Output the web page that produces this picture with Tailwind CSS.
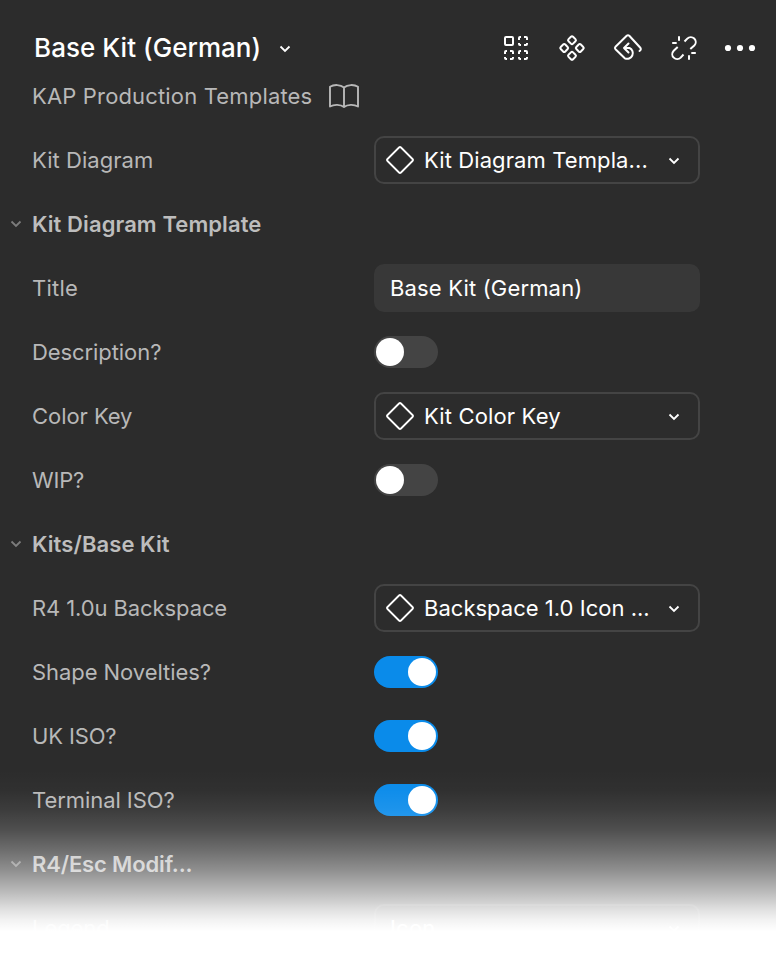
<!DOCTYPE html>
<html lang="en">
<head>
<meta charset="utf-8">
<title>Base Kit (German)</title>
<script src="https://cdn.jsdelivr.net/npm/@tailwindcss/browser@4"></script>
</head>
<body class="bg-white">
<svg class="hidden">
  <symbol id="chev" viewBox="0 0 12 8"><path d="M1.5 1.500 6 6l4.500-4.500" fill="none" stroke="currentColor" stroke-width="1.800"/></symbol>
  <symbol id="diamond" viewBox="0 0 28 28"><path d="M13 1.500 1.500 13q-1 1 0 2L13 26.500q1 1 2 0L26.500 15q1-1 0-2L15 1.500q-1-1-2 0z" fill="none" stroke="currentColor" stroke-width="1.800"/></symbol>
</svg>
<main class="relative w-[776px] h-[960px] overflow-hidden bg-[#2c2c2c] font-['Inter',sans-serif] text-[22px] leading-8 tracking-[-0.06px] text-[#b8b8b8]">
  <header class="flex h-20 items-center pt-4 pl-[34px] pr-5 text-white">
    <h1 class="text-[26px] font-[550] tracking-[0.05px]">Base Kit (German)</h1>
    <svg class="absolute left-[279px] top-[45px] h-2 w-3"><use href="#chev"/></svg>
    <div class="ml-auto flex items-center gap-6">
      <svg class="size-8" viewBox="0 0 32 32" fill="none" stroke="currentColor" stroke-width="2"><rect x="5" y="5" width="8" height="8" rx="1"/><path id="dash" d="M19 8V6q0-1 1-1h1M24 5h2q1 0 1 1v2M27 11v1q0 1-1 1h-2M21 13h-1q-1 0-1-1v-1"/><use href="#dash" y="14"/><use href="#dash" x="-14" y="14"/></svg>
      <svg class="size-8" viewBox="0 0 32 32" fill="none" stroke="currentColor" stroke-width="2"><rect x="-3.200" y="-3.200" width="6.400" height="6.400" rx="1.500" transform="translate(16 8.200) rotate(45)"/><rect x="-3.200" y="-3.200" width="6.400" height="6.400" rx="1.500" transform="translate(16 23.800) rotate(45)"/><rect x="-3.200" y="-3.200" width="6.400" height="6.400" rx="1.500" transform="translate(8.200 16) rotate(45)"/><rect x="-3.200" y="-3.200" width="6.400" height="6.400" rx="1.500" transform="translate(23.800 16) rotate(45)"/></svg>
      <svg class="size-8" viewBox="0 0 32 32" fill="none" stroke="currentColor" stroke-width="2" stroke-linecap="round" stroke-linejoin="round"><path d="M27.500 19q2.300-1.600.6-3.500L17.300 3.800q-1.300-1.200-2.600 0L3.500 14.700q-1.200 1.300 0 2.600l9.300 9A5.600 5.600 0 1 0 17.500 16H12M16.500 11.500 12 16l4.500 4.500"/></svg>
      <svg class="size-8" viewBox="0 0 32 32" fill="none" stroke="currentColor" stroke-width="2"><path d="m16.500 9.500 2.800-2.900a4.900 4.900 0 0 1 7 6.900L22.300 17M9.700 15 5.700 18.700a4.900 4.900 0 0 0 7 6.900L15.500 22.500M11 4.200v4.500M4.200 11h4.500M21 27.800v-4.500M27.800 21h-4.500"/></svg>
      <svg class="size-8" viewBox="0 0 32 32" fill="currentColor"><circle cx="4" cy="16" r="3.100"/><circle cx="16" cy="16" r="3.100"/><circle cx="28" cy="16" r="3.100"/></svg>
    </div>
  </header>
  <div class="flex h-8 items-center pl-8">
    <span class="w-[280px] whitespace-nowrap tracking-[0.16px]">KAP Production Templates</span>
    <svg class="ml-4 h-6 w-8" viewBox="0 0 32 24" fill="none" stroke="currentColor" stroke-width="1.900" stroke-linejoin="round"><path d="M16 3.500C12.500.5 6 .3 2 2.800V22.500c4-2.300 10.500-2.200 14 .5 3.500-2.700 10-2.800 14-.5V2.800C26 .3 19.500.5 16 3.500zV23"/></svg>
  </div>
  <section class="pt-4">
    <div class="flex h-16 items-center pl-8"><span class="w-[342px] tracking-[0.05px]">Kit Diagram</span>
      <div class="flex h-12 w-[326px] items-center rounded-[10px] border-2 border-[#444] pl-2.5 pr-[18px] text-white"><svg class="mr-2.5 size-7"><use href="#diamond"/></svg><span class="whitespace-nowrap tracking-[0.1px]">Kit Diagram Templa...</span><svg class="ml-auto mt-0.5 h-2 w-3"><use href="#chev"/></svg></div></div>
    <h2 class="flex h-16 items-center pl-2.5 font-[560] tracking-[0.09px] text-[#bdbdbd]"><svg class="mr-2.5 h-2 w-3 text-[#7c7c7c]"><use href="#chev"/></svg>Kit Diagram Template</h2>
    <div class="flex h-16 items-center pl-8"><span class="w-[342px] tracking-[0.24px]">Title</span>
      <div class="flex h-12 w-[326px] items-center rounded-[10px] bg-[#383838] pl-4 text-white tracking-[0.16px]">Base Kit (German)</div></div>
    <div class="flex h-16 items-center pl-8"><span class="w-[342px] tracking-[-0.08px]">Description?</span><div class="h-8 w-16 rounded-full bg-[#444] p-0.5"><div class="size-7 rounded-full bg-white"></div></div></div>
    <div class="flex h-16 items-center pl-8"><span class="w-[342px]">Color Key</span>
      <div class="flex h-12 w-[326px] items-center rounded-[10px] border-2 border-[#444] pl-2.5 pr-[18px] text-white"><svg class="mr-2.5 size-7"><use href="#diamond"/></svg><span class="tracking-[0.15px]">Kit Color Key</span><svg class="ml-auto mt-0.5 h-2 w-3"><use href="#chev"/></svg></div></div>
    <div class="flex h-16 items-center pl-8"><span class="w-[342px] tracking-[-0.2px]">WIP?</span><div class="h-8 w-16 rounded-full bg-[#444] p-0.5"><div class="size-7 rounded-full bg-white"></div></div></div>
    <h2 class="flex h-16 items-center pl-2.5 font-[560] tracking-[0.09px] text-[#bdbdbd]"><svg class="mr-2.5 h-2 w-3 text-[#7c7c7c]"><use href="#chev"/></svg>Kits/Base Kit</h2>
    <div class="flex h-16 items-center pl-8"><span class="w-[342px] tracking-[-0.1px]">R4 1.0u Backspace</span>
      <div class="flex h-12 w-[326px] items-center rounded-[10px] border-2 border-[#444] pl-2.5 pr-[18px] text-white"><svg class="mr-2.5 size-7"><use href="#diamond"/></svg><span class="whitespace-nowrap tracking-[0.02px]">Backspace 1.0 Icon ...</span><svg class="ml-auto mt-0.5 h-2 w-3"><use href="#chev"/></svg></div></div>
    <div class="flex h-16 items-center pl-8"><span class="w-[342px]">Shape Novelties?</span><div class="flex h-8 w-16 justify-end rounded-full bg-[#0a8bea] p-0.5"><div class="size-7 rounded-full bg-white"></div></div></div>
    <div class="flex h-16 items-center pl-8"><span class="w-[342px] tracking-[-0.14px]">UK ISO?</span><div class="flex h-8 w-16 justify-end rounded-full bg-[#0a8bea] p-0.5"><div class="size-7 rounded-full bg-white"></div></div></div>
    <div class="flex h-16 items-center pl-8"><span class="w-[342px]">Terminal ISO?</span><div class="flex h-8 w-16 justify-end rounded-full bg-[#0a8bea] p-0.5"><div class="size-7 rounded-full bg-white"></div></div></div>
    <h2 class="flex h-16 items-center pl-2.5 font-[560] tracking-[-0.15px] text-[#bdbdbd]"><svg class="mr-2.5 h-2 w-3 text-[#7c7c7c]"><use href="#chev"/></svg>R4/Esc Modif...</h2>
    <div class="flex h-16 items-center pl-8"><span class="w-[342px]">Legend</span>
      <div class="flex h-12 w-[326px] items-center rounded-[10px] border-2 border-[#444] pl-3.5 pr-[18px] text-white"><span class="tracking-[0.2px]">Icon</span><svg class="ml-auto mt-0.5 h-2 w-3"><use href="#chev"/></svg></div></div>
  </section>
  <div class="absolute inset-x-0 bottom-0 h-[200px] bg-[linear-gradient(to_bottom,rgb(255_255_255/0)_10px,rgb(255_255_255/0.02)_30px,rgb(255_255_255/0.08)_50px,rgb(255_255_255/0.17)_70px,rgb(255_255_255/0.31)_90px,rgb(255_255_255/0.47)_110px,rgb(255_255_255/0.66)_130px,rgb(255_255_255/0.86)_150px,rgb(255_255_255/0.94)_160px,rgb(255_255_255/1)_171px)]"></div>
</main>
</body>
</html>
